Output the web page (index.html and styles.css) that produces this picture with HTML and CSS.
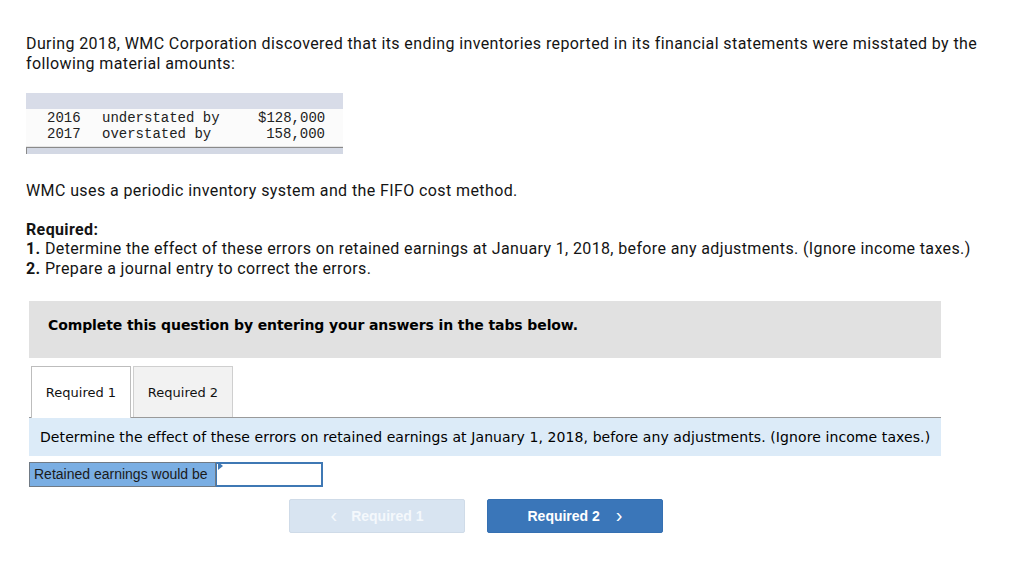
FILE: index.html
```html
<!DOCTYPE html>
<html>
<head>
<meta charset="utf-8">
<link rel="stylesheet" href="styles.css">
</head>
<body>
<div class="page">
  <p class="intro">During 2018, WMC Corporation discovered that its ending inventories reported in its financial statements were misstated by the following material amounts:</p>

  <div class="datatable">
    <div class="dt-head"></div>
    <div class="dt-body">
      <div class="dt-row"><span class="yr">2016</span><span class="desc">understated by</span><span class="amt">$128,000</span></div>
      <div class="dt-row"><span class="yr">2017</span><span class="desc">overstated by</span><span class="amt">158,000</span></div>
    </div>
    <div class="dt-foot"></div>
  </div>

  <p class="plain">WMC uses a periodic inventory system and the FIFO cost method.</p>

  <div class="required">
    <p class="req-title">Required:</p>
    <p><b>1.</b> Determine the effect of these errors on retained earnings at January 1, 2018, before any adjustments. (Ignore income taxes.)</p>
    <p><b>2.</b> Prepare a journal entry to correct the errors.</p>
  </div>

  <div class="question">
    <div class="notice">Complete this question by entering your answers in the tabs below.</div>
    <div class="tabs">
      <div class="tab active">Required 1</div>
      <div class="tab">Required 2</div>
    </div>
    <div class="tab-panel">Determine the effect of these errors on retained earnings at January 1, 2018, before any adjustments. (Ignore income taxes.)</div>
    <div class="answer-row">
      <div class="answer-label">Retained earnings would be</div>
      <div class="answer-input"><span class="flag"></span></div>
    </div>
    <div class="nav">
      <div class="btn disabled"><span class="chev">&lsaquo;</span>Required 1</div>
      <div class="btn primary">Required 2<span class="chev right">&rsaquo;</span></div>
    </div>
  </div>
</div>
</body>
</html>
```

FILE: styles.css
```css
* { box-sizing: border-box; }
html, body { margin: 0; padding: 0; background: #fff; }
body {
  font-family: Roboto, "Liberation Sans", sans-serif;
  color: #141414;
  width: 1024px;
}
.page {
  padding: 34px 0 0 26px;
}
p { margin: 0; }
.intro {
  font-size: 16px;
  line-height: 19.5px;
  letter-spacing: 0.4px;
  width: 965px;
}
.datatable {
  margin-top: 20px;
  width: 317px;
  font-family: "Liberation Mono", monospace;
  font-size: 14px;
  color: #222;
}
.dt-head {
  height: 16px;
  background: #d8dce8;
}
.dt-body {
  padding: 1px 0 4px 0;
  background: #fbfbfb;
  border-bottom: 1px solid #e6e6e6;
}
.dt-row {
  display: flex;
  height: 16px;
  line-height: 16px;
}
.yr { width: 55px; margin-left: 21px; }
.desc { width: 156px; }
.amt { width: 67px; text-align: right; }
.dt-foot {
  height: 7px;
  background: #d3d8e4;
  border-top: 1px solid #8a8a8a;
  border-left: 1px solid #8a8a8a;
}
.plain {
  margin-top: 27px;
  font-size: 16px;
  line-height: 19.5px;
  letter-spacing: 0.4px;
}
.required {
  margin-top: 19px;
  font-size: 16px;
  line-height: 19.5px;
  letter-spacing: 0.37px;
}
.req-title { font-weight: 700; }
.required b { font-weight: 700; }

.question {
  margin-top: 23px;
  margin-left: 3px;
  width: 912px;
  font-family: "DejaVu Sans", Verdana, sans-serif;
  font-size: 13px;
  color: #000;
}
.notice {
  background: #e1e1e1;
  height: 57px;
  padding: 16px 0 0 19px;
  font-weight: 700;
  font-size: 14px;
  letter-spacing: -0.1px;
}
.tabs {
  display: flex;
  gap: 2px;
  margin-top: 8px;
  padding-left: 2px;
  border-bottom: 1px solid #9a9a9a;
  height: 52px;
}
.tab {
  width: 100px;
  height: 51px;
  border: 1px solid #cfcfcf;
  border-bottom: none;
  background: #f2f2f2;
  padding-top: 18px;
  text-align: center;
  font-size: 13px;
  color: #111;
}
.tab.active {
  background: #fff;
  border-color: #bdbdbd;
  height: 52px;
}
.tab-panel {
  background: #dcebf8;
  height: 38px;
  padding: 11px 0 0 11px;
  font-size: 14px;
  letter-spacing: 0.09px;
}
.answer-row {
  display: flex;
  margin-top: 6px;
  font-family: "Liberation Sans", Arial, sans-serif;
  font-size: 14px;
}
.answer-label {
  width: 187px;
  height: 25px;
  background: #7aaee3;
  border: 1px solid #707a85;
  padding: 3px 0 0 4px;
  color: #1a1a1a;
}
.answer-input {
  position: relative;
  width: 107px;
  height: 25px;
  background: #fff;
  border: 2px solid #3f78b4;
  border-left-width: 1px;
}
.flag {
  position: absolute;
  left: 1px;
  top: -2px;
  width: 0;
  height: 0;
  border-top: 4px solid transparent;
  border-bottom: 4px solid transparent;
  border-left: 5px solid #3f78b4;
}
.nav {
  display: flex;
  gap: 22px;
  margin-top: 12px;
  padding-left: 260px;
}
.btn {
  width: 176px;
  height: 34px;
  border-radius: 2px;
  display: flex;
  align-items: center;
  justify-content: center;
  font-family: "Liberation Sans", Arial, sans-serif;
  font-weight: 700;
  font-size: 14px;
  color: #fff;
}
.btn.disabled {
  background: #d8e4f1;
  border: 1px solid #cfdbe8;
  color: #f4f8fc;
}
.btn.primary {
  background: #3a76b9;
  border: 1px solid #3570b2;
}
.chev {
  font-size: 20px;
  font-weight: 400;
  margin-right: 14px;
  line-height: 1;
  position: relative;
  top: -1px;
}
.chev.right {
  margin-right: 0;
  margin-left: 16px;
}
```
